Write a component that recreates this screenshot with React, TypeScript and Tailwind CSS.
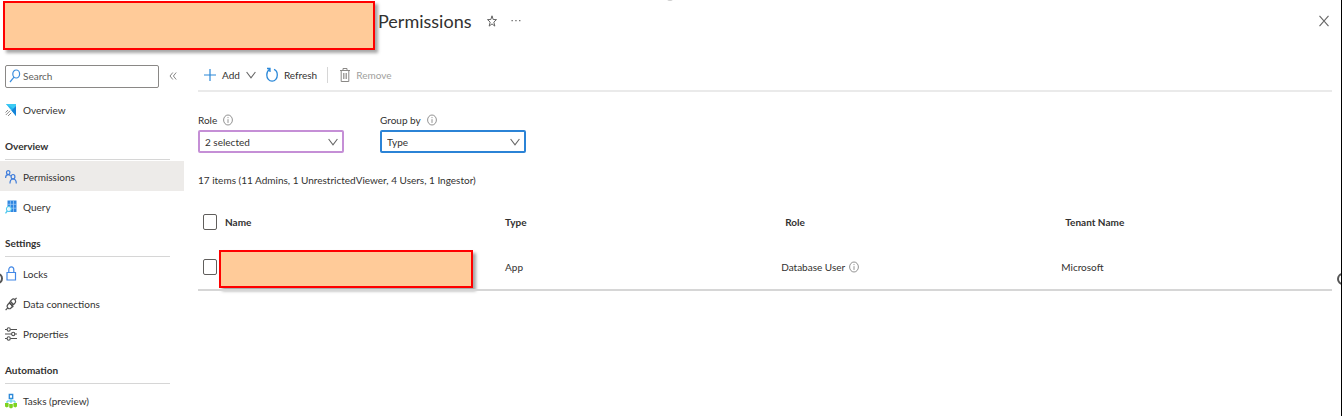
import React from "react";

type IconProps = { className?: string };

function SearchIcon({ className }: IconProps) {
  return (
    <svg viewBox="0 0 12 14" fill="none" stroke="#3b8ede" strokeWidth="1.2" className={className} aria-hidden="true">
      <ellipse cx="7.2" cy="5" rx="3.4" ry="4" />
      <path d="M5 8.2 1 13" />
    </svg>
  );
}

function OverviewIcon() {
  return (
    <svg viewBox="0 0 12 14" className="h-3.5 w-3" aria-hidden="true">
      <path d="M1 1h10v12z" fill="#25b5ee" />
      <path d="M1 1h10v6z" fill="#3ccbf4" />
      <path d="M6.5 7.5 11 3v10z" fill="#1683d8" />
      <path d="M0 7h4l4 6H0z" fill="#fff" />
      <path d="M.5 9.500 3 7M.8 12l4.200-4.200M3 13l3.200-3.200" stroke="#8a8a8a" strokeWidth="1" />
    </svg>
  );
}

function PeopleIcon() {
  return (
    <svg viewBox="0 0 12 14" fill="none" stroke="#3f7ddb" strokeWidth="1.2" className="h-3.5 w-3" aria-hidden="true">
      <ellipse cx="3.2" cy="2.6" rx="1.7" ry="2" />
      <path d="M.6 8c0-2 1-3.300 2.600-3.300 1.200 0 2 .6 2.400 1.600" />
      <ellipse cx="8" cy="6.7" rx="1.9" ry="2.2" />
      <path d="M5 13.400C5 10.700 6.200 9 8 9s3.300 1.700 3.300 4.400" />
    </svg>
  );
}

function QueryIcon() {
  return (
    <svg viewBox="0 0 12 14" className="h-3.5 w-3" aria-hidden="true">
      <path d="M2.500.5H11.500v11.500h-9z" fill="#2f86e0" />
      <path d="M5.400.5v11.500M8.500.5v11.500M2.500 4.300h9M2.500 8.200h9" stroke="#a9d3fa" strokeWidth=".7" />
      <circle cx="3.8" cy="9" r="2.5" fill="#e6f8fd" stroke="#4cc9ee" />
      <path d="M2.200 11 .5 13.300" stroke="#4cc9ee" strokeWidth="1.3" />
    </svg>
  );
}

function LockIcon() {
  return (
    <svg viewBox="0 0 12 16" fill="none" stroke="#4288e6" strokeWidth="1.2" className="h-4 w-3" aria-hidden="true">
      <path d="M2 6.500h8.500v7.500H2zM3.800 6.500V3.800c0-3.900 5-3.900 5 0v2.700" />
    </svg>
  );
}

function PlugIcon() {
  return (
    <svg viewBox="0 0 12 14" fill="none" stroke="#505050" strokeWidth="1.2" className="h-3.5 w-3" aria-hidden="true">
      <path d="M.6 13.200 3 10.700M9.500 3.200 11.600.8M4.100 5 8.300 10M4.700 5.600 2.900 7.500c-1.100 1.300-.9 2.600 0 3.500 1 1 2.100 1 3.100 0l1.800-1.700M5.400 4.200l1.500-1.600c1-1 2.200-.8 3 .2.900 1 .9 2.200 0 3.300L8.600 7.700zM4.900 7.500l1.500-1.600M6.300 9.100l1.500-1.600" />
    </svg>
  );
}

function SlidersIcon() {
  return (
    <svg viewBox="0 0 12 14" fill="none" stroke="#505050" strokeWidth="1.1" className="h-3.5 w-3" aria-hidden="true">
      <path d="M0 2.500h2M5.500 2.500H12M0 7h6.500M10 7h2M0 11.500h2M5.500 11.500H12" />
      <ellipse cx="3.7" cy="2.5" rx="1.6" ry="1.7" />
      <ellipse cx="8.2" cy="7" rx="1.6" ry="1.7" />
      <ellipse cx="3.7" cy="11.5" rx="1.6" ry="1.7" />
    </svg>
  );
}

function TasksIcon() {
  return (
    <svg viewBox="0 0 12 16" fill="none" className="h-4 w-3" aria-hidden="true">
      <path d="M4.300 1.500h3.400v4H4.300z" stroke="#2b88d8" strokeWidth="1.3" />
      <path d="M6 5.500V10M2 10.500V8h8v2.500" stroke="#50c8ee" />
      <path d="M0 10h3.600v3.600L1.800 14.500 0 13.500zM4.200 11h3.600v3.600L6 15.500l-1.800-1zM8.400 10H12v3.500l-1.800 1-1.800-1z" fill="#7ed321" />
    </svg>
  );
}

function InfoIcon() {
  return (
    <svg viewBox="0 0 10 12" fill="none" stroke="#767676" strokeWidth=".8" className="h-3 w-2.5" aria-hidden="true">
      <ellipse cx="5" cy="6" rx="4.4" ry="5" />
      <path d="M5 5.200v3.700M5 3.100v1" />
    </svg>
  );
}

function Chevron({ className }: IconProps) {
  return (
    <svg viewBox="0 0 10 8" fill="none" stroke="#666" strokeWidth="1.1" className={className} aria-hidden="true">
      <path d="m.6 1 4.400 5.800L9.400 1" />
    </svg>
  );
}

const groups = [
  {
    title: "Overview",
    items: [
      { label: "Permissions", icon: <PeopleIcon />, active: true },
      { label: "Query", icon: <QueryIcon />, active: false },
    ],
  },
  {
    title: "Settings",
    items: [
      { label: "Locks", icon: <LockIcon />, active: false },
      { label: "Data connections", icon: <PlugIcon />, active: false },
      { label: "Properties", icon: <SlidersIcon />, active: false },
    ],
  },
  {
    title: "Automation",
    items: [{ label: "Tasks (preview)", icon: <TasksIcon />, active: false }],
  },
];

function NavItem({ label, icon, active }: { label: string; icon: React.ReactNode; active?: boolean }) {
  return (
    <a
      href="#"
      aria-current={active ? "page" : undefined}
      className={active ? "flex h-[30px] items-center gap-1.5 bg-[#edebe9] pt-0.5 pl-[5px]" : "flex h-[30px] items-center gap-1.5 pt-0.5 pl-[5px]"}
    >
      {icon}
      {label}
    </a>
  );
}

function Filter({ id, label, value, tone }: { id: string; label: string; value: string; tone: string }) {
  return (
    <div className="w-[146px]">
      <div className="flex h-5 items-center gap-1.5">
        <label htmlFor={id}>{label}</label>
        <InfoIcon />
      </div>
      <div className="relative">
        <select id={id} className={tone}>
          <option>{value}</option>
        </select>
        <Chevron className="pointer-events-none absolute top-2 right-1.5 h-2 w-2.5" />
      </div>
    </div>
  );
}

export default function App() {
  return (
    <div className="relative min-h-screen overflow-hidden border-r border-black bg-white font-['Lato','Open_Sans',sans-serif] text-[10px] leading-4 text-[#323130]">
      <header className="flex h-16 items-start pt-px pr-3 pl-[3px]">
        <div className="h-[49px] w-[372px] border-2 border-[#ff0000] bg-[#ffcb99] shadow-[3px_3px_3px_rgba(0,0,0,0.35)]" />
        <div className="flex h-10 flex-1 items-center pl-[3px]">
          <h1 className="text-[18px] leading-6">Permissions</h1>
          <button type="button" aria-label="Add to favorites" className="ml-4">
            <svg viewBox="0 0 12 12" fill="none" stroke="#555" strokeWidth="1" className="h-3 w-2.5" preserveAspectRatio="none" aria-hidden="true">
              <path d="m6 .8 1.400 3.700 4 .1-3.200 2.500 1.200 4L6 8.900l-3.400 2.200 1.200-4L.6 4.600l4-.1z" />
            </svg>
          </button>
          <button type="button" aria-label="More" className="ml-3.5">
            <svg viewBox="0 0 10 4" fill="#666" className="h-1 w-2.5" aria-hidden="true">
              <path d="M.5 1h1.300v1.200H.5zM4.300 1h1.300v1.200H4.300zM8.100 1h1.300v1.200H8.100z" />
            </svg>
          </button>
          <button type="button" aria-label="Close" className="ml-auto">
            <svg viewBox="0 0 10 12" fill="none" stroke="#666" strokeWidth="1.1" className="h-3 w-2.5" aria-hidden="true">
              <path d="m.5.8 9 10.400M9.500.8l-9 10.400" />
            </svg>
          </button>
        </div>
      </header>

      <div className="flex">
        <aside className="w-[184px] shrink-0">
          <div className="mb-1.5 flex h-6 items-center gap-2.5 pl-[5px]">
            <label className="flex h-[23px] w-[154px] items-center gap-0.5 rounded-xs border border-[#8a8886] pl-[3px]">
              <SearchIcon className="h-3.5 w-3 shrink-0" />
              <input type="text" aria-label="Search" placeholder="Search" className="w-full min-w-0 outline-none placeholder:text-[#605e5c]" />
            </label>
            <button type="button" aria-label="Collapse menu">
              <svg viewBox="0 0 8 8" fill="none" stroke="#777" strokeWidth=".9" className="size-2" aria-hidden="true">
                <path d="M3.800.5 1 4l2.800 3.500M7.200.5 4.400 4l2.800 3.500" />
              </svg>
            </button>
          </div>
          <nav>
            <NavItem label="Overview" icon={<OverviewIcon />} />
            {groups.map((group) => (
              <section key={group.title}>
                <h2 className="mt-3 mr-3.5 mb-px ml-[5px] h-6 border-b border-[#d6d6d6] leading-5 font-bold">{group.title}</h2>
                {group.items.map((item) => (
                  <NavItem key={item.label} {...item} />
                ))}
              </section>
            ))}
          </nav>
        </aside>

        <main className="min-w-0 flex-1 pr-[9px] pl-3.5">
          <div className="flex h-7 items-center border-b-2 border-[#eaeaea] pb-1 pl-1.5">
            <button type="button" className="flex items-center gap-1.5">
              <svg viewBox="0 0 12 14" stroke="#2b88d8" strokeWidth="1.2" className="h-3.5 w-3" aria-hidden="true">
                <path d="M6 1v12M0 7h12" />
              </svg>
              Add
              <Chevron className="h-2 w-2.5" />
            </button>
            <button type="button" className="ml-2.5 flex items-center gap-1.5">
              <svg viewBox="0 0 12 16" fill="none" stroke="#2b88d8" strokeWidth="1.3" className="h-4 w-3" aria-hidden="true">
                <path d="M8 2.300c2 .8 3.300 3 3.300 5.700 0 3.400-2.200 6.200-5.200 6.200S.8 11.400.8 8c0-2.500 1.100-4.500 2.700-5.500M1 1.500h3V5" />
              </svg>
              Refresh
            </button>
            <span className="mr-3 ml-2.5 h-4 w-px bg-[#d6d6d6]" />
            <button type="button" disabled className="flex items-center gap-1.5 text-[#a19f9d]">
              <svg viewBox="0 0 10 16" fill="none" stroke="#8a8886" className="h-4 w-2.5" aria-hidden="true">
                <path d="M0 3.500h10M3 3.500v-2h4v2M1.200 3.500v11h7.600v-11" />
                <path d="M3.500 6v6M5 6v6M6.500 6v6" strokeWidth=".8" />
              </svg>
              Remove
            </button>
          </div>

          <div className="mt-[18px] flex gap-9">
            <Filter
              id="role"
              label="Role"
              value="2 selected"
              tone="block h-[23px] w-full appearance-none rounded-xs border-2 border-[#c58fd6] bg-white pl-[5px] outline-none"
            />
            <Filter
              id="group-by"
              label="Group by"
              value="Type"
              tone="block h-[23px] w-full appearance-none rounded-xs border-2 border-[#2b83d6] bg-white pl-[5px] outline-none"
            />
          </div>

          <p className="mt-[19px]">17 items (11 Admins, 1 UnrestrictedViewer, 4 Users, 1 Ingestor)</p>

          <table className="mt-3 w-full table-fixed border-b-2 border-[#d6d6d6] text-left">
            <thead>
              <tr className="h-11">
                <th className="w-[27px] pl-[5px]">
                  <input type="checkbox" aria-label="Select all" className="block h-4 w-3.5 appearance-none rounded-xs border border-[#605e5c]" />
                </th>
                <th className="w-[24.7%]">Name</th>
                <th className="w-[24.7%]">Type</th>
                <th className="w-[24.7%]">Role</th>
                <th>Tenant Name</th>
              </tr>
            </thead>
            <tbody>
              <tr className="h-[46px]">
                <td className="pl-[5px]">
                  <input type="checkbox" aria-label="Select row" className="block h-4 w-3.5 appearance-none rounded-xs border border-[#605e5c]" />
                </td>
                <td className="pt-1">
                  <div className="-ml-1.5 h-[38px] w-[254px] border-2 border-[#ff0000] bg-[#ffcb99] shadow-[3px_3px_3px_rgba(0,0,0,0.35)]" />
                </td>
                <td>App</td>
                <td>
                  <span className="-ml-1 flex items-center gap-1">
                    Database User
                    <InfoIcon />
                  </span>
                </td>
                <td>
                  <span className="-ml-1 block">Microsoft</span>
                </td>
              </tr>
            </tbody>
          </table>
        </main>
      </div>

      <span className="absolute top-[273px] -left-2 size-[11px] rounded-full border-2 border-[#555]" />
      <span className="absolute top-[273px] -right-2 size-3 rounded-full border-2 border-[#555]" />
      <span className="absolute -top-1 left-1/2 -ml-1 h-[5px] w-1.5 rounded-full bg-[#d0d0d0]" />
    </div>
  );
}
